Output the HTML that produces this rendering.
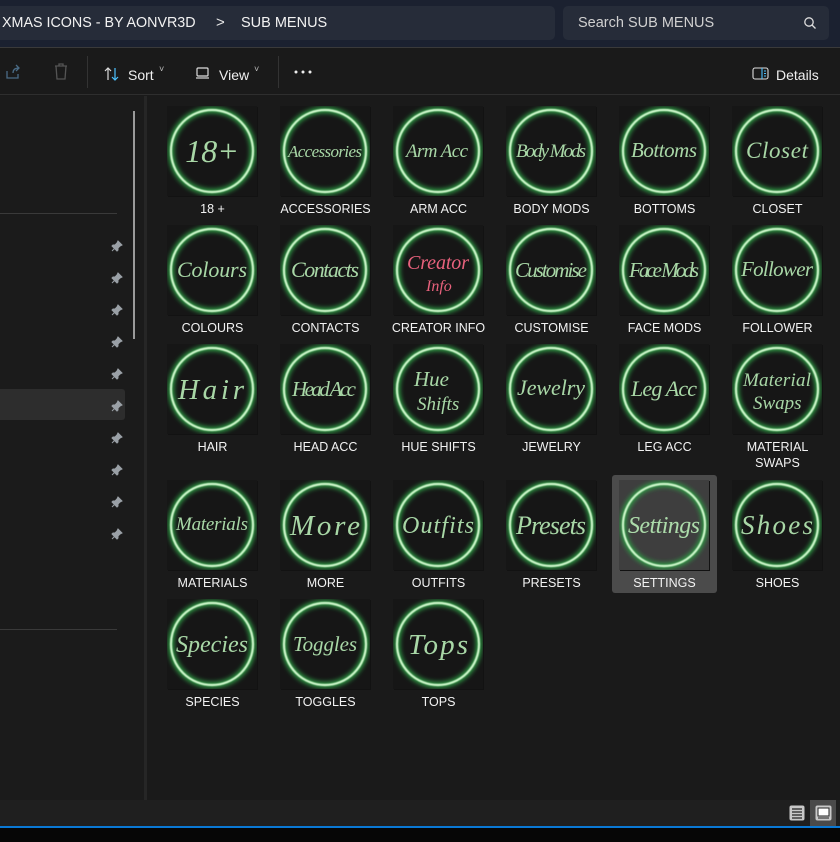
<!DOCTYPE html>
<html><head><meta charset="utf-8"><style>
*{margin:0;padding:0;box-sizing:border-box}
body{width:840px;height:842px;background:#1a1a1a;font-family:"Liberation Sans",sans-serif;position:relative;overflow:hidden;color:#fff}
.a{position:absolute}
.t{position:absolute;width:90px;height:90px;background:#161616;box-shadow:1px 1px 0 #121212}
.l{position:absolute;width:113px;text-align:center;font-size:12.5px;color:#f2f2f2;line-height:16px}
svg text{font-family:"Liberation Serif",serif;font-style:italic;fill:#b8ecb6;opacity:.9}
.pin{position:absolute;left:111px}
</style></head><body>
<svg width="0" height="0" class="a"><defs>
<filter id="g" x="-25%" y="-25%" width="150%" height="150%"><feGaussianBlur stdDeviation="2.5"/></filter>
<filter id="h" x="-25%" y="-25%" width="150%" height="150%"><feGaussianBlur stdDeviation="0.6"/></filter>
<symbol id="c" viewBox="0 0 90 90"><circle cx="45" cy="45" r="41" stroke="#2f9d45" stroke-width="6" fill="none" filter="url(#g)"/><circle cx="45" cy="45" r="41" stroke="#cff8cc" stroke-width="2.2" fill="none" filter="url(#h)"/></symbol>
<symbol id="p" viewBox="0 0 12 12"><path d="M7 1l4 4-2 1-2 2 0 2-1 1-5-5 1-1 2 0 2-2z M3.5 8.5L1 11" fill="#9aa0a6" stroke="#9aa0a6" stroke-width="1"/></symbol>
</defs></svg>
<!-- top bar -->
<div class="a" style="left:0;top:0;width:840px;height:47px;background:#1b2130"></div>
<div class="a" style="left:0;top:6px;width:555px;height:34px;background:#262c39;border-radius:0 5px 5px 0"></div>
<div class="a" style="left:2px;top:15px;font-size:14.3px;color:#f2f2f2">XMAS ICONS - BY AONVR3D</div>
<div class="a" style="left:216px;top:14px;font-size:15px;color:#e8e8e8">&gt;</div>
<div class="a" style="left:241px;top:15px;font-size:14.5px;color:#f2f2f2">SUB MENUS</div>
<div class="a" style="left:563px;top:6px;width:266px;height:34px;background:#262c39;border-radius:5px"></div>
<div class="a" style="left:578px;top:15px;font-size:14.5px;color:#d0d0d0">Search SUB MENUS</div>
<svg class="a" style="left:803px;top:16px" width="14" height="14"><circle cx="6" cy="6" r="4.2" stroke="#ddd" stroke-width="1.3" fill="none"/><line x1="9" y1="9" x2="12.5" y2="12.5" stroke="#ddd" stroke-width="1.3"/></svg>
<!-- toolbar -->
<div class="a" style="left:0;top:47px;width:840px;height:48px;background:#1a1a1a;border-top:1px solid #3a3a3a;border-bottom:1px solid #2e2e2e"></div>
<svg class="a" style="left:5px;top:64px" width="16" height="16"><path d="M2 7v7h11v-4M8 9c0-4 3-5 6-5M11 1l3 3-3 3" stroke="#4a6b85" stroke-width="1.3" fill="none"/></svg>
<svg class="a" style="left:53px;top:63px" width="16" height="18"><path d="M2 3h12M6 3V1h4v2M3 3l1 13h8l1-13" stroke="#555" stroke-width="1.3" fill="none"/></svg>
<div class="a" style="left:87px;top:56px;width:1px;height:32px;background:#333"></div>
<svg class="a" style="left:104px;top:66px" width="16" height="16"><path d="M4 14V2M1 5l3-3 3 3" stroke="#ddd" stroke-width="1.2" fill="none"/><path d="M11 2v12M8 11l3 3 3-3" stroke="#4cc2ff" stroke-width="1.2" fill="none"/></svg>
<div class="a" style="left:128px;top:67px;font-size:14px;color:#f0f0f0">Sort</div>
<div class="a" style="left:159px;top:64px;font-size:9px;color:#bbb">˅</div>
<svg class="a" style="left:196px;top:67px" width="14" height="12"><rect x="1" y="1" width="11" height="8" rx="1" stroke="#ddd" stroke-width="1.2" fill="none"/><line x1="0" y1="11" x2="13" y2="11" stroke="#ddd" stroke-width="1.2"/></svg>
<div class="a" style="left:219px;top:67px;font-size:14px;color:#f0f0f0">View</div>
<div class="a" style="left:254px;top:64px;font-size:9px;color:#bbb">˅</div>
<div class="a" style="left:278px;top:56px;width:1px;height:32px;background:#333"></div>
<svg class="a" style="left:294px;top:70px" width="18" height="4"><circle cx="2" cy="2" r="1.5" fill="#eee"/><circle cx="9" cy="2" r="1.5" fill="#eee"/><circle cx="16" cy="2" r="1.5" fill="#eee"/></svg>
<svg class="a" style="left:752px;top:67px" width="17" height="13"><rect x="1" y="1" width="15" height="11" rx="2" stroke="#ddd" stroke-width="1.1" fill="none"/><path d="M10 1v11M12 4h2M12 6.5h2M12 9h2" stroke="#4cc2ff" stroke-width="1.1"/></svg>
<div class="a" style="left:776px;top:67px;font-size:14px;color:#f0f0f0">Details</div>
<!-- sidebar -->
<div class="a" style="left:0;top:96px;width:144px;height:704px;background:#1b1b1b"></div>
<div class="a" style="left:144px;top:96px;width:3px;height:704px;background:#262626"></div>
<div class="a" style="left:133px;top:111px;width:2px;height:228px;background:#9a9a9a"></div>
<div class="a" style="left:0;top:213px;width:117px;height:1px;background:#3a3a3a"></div>
<div class="a" style="left:0;top:629px;width:117px;height:1px;background:#3a3a3a"></div>
<div class="a" style="left:0;top:389px;width:125px;height:31px;background:#2d2d2d;border-radius:0 3px 3px 0"></div>
<svg class="pin" style="top:240px" width="12" height="12"><use href="#p"/></svg>
<svg class="pin" style="top:272px" width="12" height="12"><use href="#p"/></svg>
<svg class="pin" style="top:304px" width="12" height="12"><use href="#p"/></svg>
<svg class="pin" style="top:336px" width="12" height="12"><use href="#p"/></svg>
<svg class="pin" style="top:368px" width="12" height="12"><use href="#p"/></svg>
<svg class="pin" style="top:400px" width="12" height="12"><use href="#p"/></svg>
<svg class="pin" style="top:432px" width="12" height="12"><use href="#p"/></svg>
<svg class="pin" style="top:464px" width="12" height="12"><use href="#p"/></svg>
<svg class="pin" style="top:496px" width="12" height="12"><use href="#p"/></svg>
<svg class="pin" style="top:528px" width="12" height="12"><use href="#p"/></svg>
<!-- selected -->
<div class="a" style="left:612px;top:475px;width:105px;height:118px;background:#4b4b4b;border-radius:3px"></div>
<!-- grid -->
<div class="t" style="left:167px;top:106px"><svg width="90" height="90"><use href="#c"/><text x="45" y="56" font-size="32" text-anchor="middle">18+</text></svg></div><div class="l" style="left:156px;top:201px">18 +</div>
<div class="t" style="left:280px;top:106px"><svg width="90" height="90"><use href="#c"/><text x="8" y="51" font-size="17" textLength="74">Accessories</text></svg></div><div class="l" style="left:269px;top:201px">ACCESSORIES</div>
<div class="t" style="left:393px;top:106px"><svg width="90" height="90"><use href="#c"/><text x="13" y="51" font-size="19" textLength="62">Arm Acc</text></svg></div><div class="l" style="left:382px;top:201px">ARM ACC</div>
<div class="t" style="left:506px;top:106px"><svg width="90" height="90"><use href="#c"/><text x="10" y="51" font-size="19" textLength="70">Body Mods</text></svg></div><div class="l" style="left:495px;top:201px">BODY MODS</div>
<div class="t" style="left:619px;top:106px"><svg width="90" height="90"><use href="#c"/><text x="12" y="51" font-size="21" textLength="66">Bottoms</text></svg></div><div class="l" style="left:608px;top:201px">BOTTOMS</div>
<div class="t" style="left:732px;top:106px"><svg width="90" height="90"><use href="#c"/><text x="14" y="52" font-size="23" textLength="62">Closet</text></svg></div><div class="l" style="left:721px;top:201px">CLOSET</div>

<div class="t" style="left:167px;top:225px"><svg width="90" height="90"><use href="#c"/><text x="10" y="52" font-size="22" textLength="70">Colours</text></svg></div><div class="l" style="left:156px;top:320px">COLOURS</div>
<div class="t" style="left:280px;top:225px"><svg width="90" height="90"><use href="#c"/><text x="11" y="52" font-size="22" textLength="68">Contacts</text></svg></div><div class="l" style="left:269px;top:320px">CONTACTS</div>
<div class="t" style="left:393px;top:225px"><svg width="90" height="90"><use href="#c"/><text x="14" y="44" font-size="20" textLength="62" style="fill:#ff6a88">Creator</text><text x="33" y="66" font-size="16" style="fill:#ff6a88">Info</text></svg></div><div class="l" style="left:382px;top:320px">CREATOR INFO</div>
<div class="t" style="left:506px;top:225px"><svg width="90" height="90"><use href="#c"/><text x="9" y="52" font-size="21" textLength="72">Customise</text></svg></div><div class="l" style="left:495px;top:320px">CUSTOMISE</div>
<div class="t" style="left:619px;top:225px"><svg width="90" height="90"><use href="#c"/><text x="10" y="52" font-size="21" textLength="70">Face Mods</text></svg></div><div class="l" style="left:608px;top:320px">FACE MODS</div>
<div class="t" style="left:732px;top:225px"><svg width="90" height="90"><use href="#c"/><text x="9" y="51" font-size="21" textLength="72">Follower</text></svg></div><div class="l" style="left:721px;top:320px">FOLLOWER</div>

<div class="t" style="left:167px;top:344px"><svg width="90" height="90"><use href="#c"/><text x="11" y="55" font-size="29" textLength="66">Hair</text></svg></div><div class="l" style="left:156px;top:439px">HAIR</div>
<div class="t" style="left:280px;top:344px"><svg width="90" height="90"><use href="#c"/><text x="12" y="52" font-size="21" textLength="64">Head Acc</text></svg></div><div class="l" style="left:269px;top:439px">HEAD ACC</div>
<div class="t" style="left:393px;top:344px"><svg width="90" height="90"><use href="#c"/><text x="21" y="42" font-size="21">Hue</text><text x="24" y="66" font-size="19">Shifts</text></svg></div><div class="l" style="left:382px;top:439px">HUE SHIFTS</div>
<div class="t" style="left:506px;top:344px"><svg width="90" height="90"><use href="#c"/><text x="11" y="51" font-size="22" textLength="68">Jewelry</text></svg></div><div class="l" style="left:495px;top:439px">JEWELRY</div>
<div class="t" style="left:619px;top:344px"><svg width="90" height="90"><use href="#c"/><text x="12" y="52" font-size="22" textLength="66">Leg Acc</text></svg></div><div class="l" style="left:608px;top:439px">LEG ACC</div>
<div class="t" style="left:732px;top:344px"><svg width="90" height="90"><use href="#c"/><text x="11" y="42" font-size="19" textLength="68">Material</text><text x="21" y="65" font-size="19">Swaps</text></svg></div><div class="l" style="left:721px;top:439px">MATERIAL<br>SWAPS</div>

<div class="t" style="left:167px;top:480px"><svg width="90" height="90"><use href="#c"/><text x="9" y="50" font-size="19" textLength="72">Materials</text></svg></div><div class="l" style="left:156px;top:575px">MATERIALS</div>
<div class="t" style="left:280px;top:480px"><svg width="90" height="90"><use href="#c"/><text x="10" y="55" font-size="29" textLength="70">More</text></svg></div><div class="l" style="left:269px;top:575px">MORE</div>
<div class="t" style="left:393px;top:480px"><svg width="90" height="90"><use href="#c"/><text x="9" y="53" font-size="24" textLength="72">Outfits</text></svg></div><div class="l" style="left:382px;top:575px">OUTFITS</div>
<div class="t" style="left:506px;top:480px"><svg width="90" height="90"><use href="#c"/><text x="10" y="54" font-size="26" textLength="70">Presets</text></svg></div><div class="l" style="left:495px;top:575px">PRESETS</div>
<div class="t" style="left:619px;top:480px;background:#3e3e3e"><svg width="90" height="90"><use href="#c"/><text x="9" y="53" font-size="24" textLength="72">Settings</text></svg></div><div class="l" style="left:608px;top:575px">SETTINGS</div>
<div class="t" style="left:732px;top:480px"><svg width="90" height="90"><use href="#c"/><text x="9" y="54" font-size="27" textLength="72">Shoes</text></svg></div><div class="l" style="left:721px;top:575px">SHOES</div>

<div class="t" style="left:167px;top:599px"><svg width="90" height="90"><use href="#c"/><text x="9" y="53" font-size="24" textLength="72">Species</text></svg></div><div class="l" style="left:156px;top:694px">SPECIES</div>
<div class="t" style="left:280px;top:599px"><svg width="90" height="90"><use href="#c"/><text x="13" y="52" font-size="21" textLength="64">Toggles</text></svg></div><div class="l" style="left:269px;top:694px">TOGGLES</div>
<div class="t" style="left:393px;top:599px"><svg width="90" height="90"><use href="#c"/><text x="15" y="55" font-size="29" textLength="60">Tops</text></svg></div><div class="l" style="left:382px;top:694px">TOPS</div>
<!-- status bar -->
<div class="a" style="left:0;top:800px;width:840px;height:26px;background:#1f1f1f"></div>
<svg class="a" style="left:789px;top:805px" width="16" height="16"><rect x="0.5" y="0.5" width="15" height="15" rx="2" fill="#c8c8c8"/><path d="M3 4h10M3 7h10M3 10h10M3 13h10" stroke="#222" stroke-width="1.2"/></svg>
<div class="a" style="left:810px;top:800px;width:26px;height:26px;background:#4a4a4a"></div>
<svg class="a" style="left:815px;top:805px" width="17" height="16"><rect x="0.5" y="0.5" width="16" height="15" rx="2" fill="#c8c8c8"/><rect x="3" y="3" width="11" height="8" fill="#fff" stroke="#222" stroke-width="1"/><line x1="3" y1="13" x2="14" y2="13" stroke="#222"/></svg>
<div class="a" style="left:0;top:826px;width:840px;height:2px;background:#0a78d4"></div>
<div class="a" style="left:0;top:828px;width:840px;height:14px;background:#060606"></div>
</body></html>
